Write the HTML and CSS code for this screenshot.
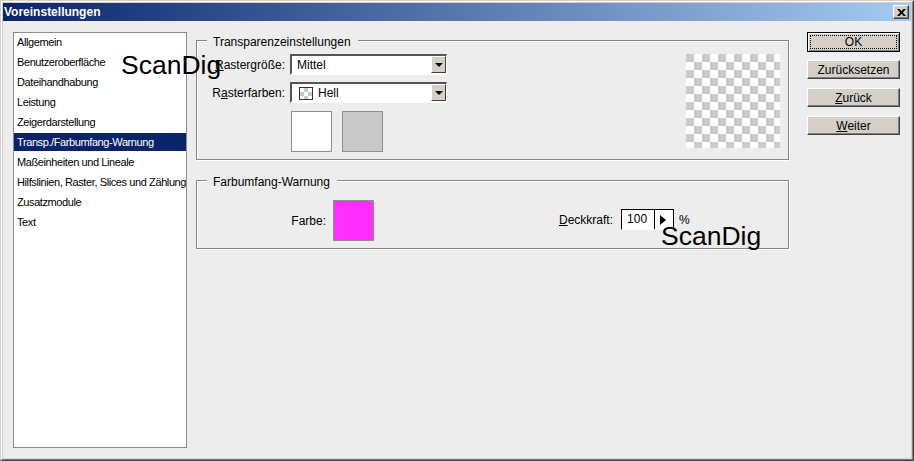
FILE: index.html
```html
<!DOCTYPE html>
<html lang="de">

<head>
  <meta charset="utf-8" />
  <title>Voreinstellungen</title>
  <link rel="stylesheet" href="styles.css">
</head>

<body>
  <div class="window">
    <div class="frame">
      <div class="titlebar">
        <span class="title">Voreinstellungen</span>
        <button class="close" aria-label="Schließen">
          <svg width="9" height="7" viewBox="0 0 9 7"><path d="M0 0h2.500l2 2.200 2-2.200H9L5.800 3.500 9 7H6.500l-2-2.200-2 2.200H0l3.200-3.500z" /></svg>
        </button>
      </div>
      <div class="content">
        <ul class="nav">
          <li>Allgemein</li>
          <li>Benutzeroberfläche</li>
          <li>Dateihandhabung</li>
          <li>Leistung</li>
          <li>Zeigerdarstellung</li>
          <li class="active">Transp./Farbumfang-Warnung</li>
          <li>Maßeinheiten und Lineale</li>
          <li>Hilfslinien, Raster, Slices und Zählung</li>
          <li>Zusatzmodule</li>
          <li>Text</li>
        </ul>

        <div class="panels">
          <fieldset class="group group-transparency">
            <legend>Transparenzeinstellungen</legend>
            <div class="settings">
              <div class="row">
                <label><u>R</u>astergröße:</label>
                <div class="select">
                  <span class="select-value">Mittel</span>
                  <span class="select-arrow"></span>
                </div>
              </div>
              <div class="row">
                <label>R<u>a</u>sterfarben:</label>
                <div class="select">
                  <span class="select-value"><i class="mini-checker"></i>Hell</span>
                  <span class="select-arrow"></span>
                </div>
              </div>
              <div class="swatches">
                <div class="swatch swatch-white"></div>
                <div class="swatch swatch-grey"></div>
              </div>
            </div>
            <div class="checker"></div>
          </fieldset>

          <fieldset class="group group-gamut">
            <legend>Farbumfang-Warnung</legend>
            <div class="gamut-color">
              <label>Farbe:</label>
              <div class="swatch swatch-magenta"></div>
            </div>
            <div class="gamut-opacity">
              <label><u>D</u>eckkraft:</label>
              <div class="spin">
                <span class="spin-value">100</span>
                <span class="spin-arrow"></span>
              </div>
              <span class="unit">%</span>
            </div>
          </fieldset>
        </div>

        <div class="actions">
          <button class="btn btn-default"><span>OK</span></button>
          <button class="btn">Zurücksetzen</button>
          <button class="btn"><u>Z</u>urück</button>
          <button class="btn"><u>W</u>eiter</button>
        </div>
      </div>
    </div>
  </div>

  <div class="mark mark-one">ScanDig</div>
  <div class="mark mark-two">ScanDig</div>
</body>

</html>
```

FILE: styles.css
```css
* {
  box-sizing: border-box;
}

html,
body {
  width: 914px;
  height: 461px;
  margin: 0;
  padding: 0;
  overflow: hidden;
}

body {
  position: relative;
  font-family: "Liberation Sans", Arial, sans-serif;
  font-size: 11px;
  color: #000;
  background: #ededed;
}

.window {
  width: 914px;
  height: 461px;
  border: 1px solid #404040;
  border-top-color: #d4d0c8;
  border-left-color: #d4d0c8;
}

.frame {
  display: flex;
  flex-direction: column;
  height: 100%;
  padding: 1px;
  background: #d4d0c8;
  border: 1px solid #808080;
  border-top-color: #fff;
  border-left-color: #fff;
}

.titlebar {
  display: flex;
  align-items: center;
  justify-content: space-between;
  flex: none;
  height: 18px;
  padding: 0 2px 0 1px;
  background: linear-gradient(to right, #0a246a, #a6caf0);
}

.title {
  font-size: 12px;
  font-weight: bold;
  color: #fff;
}

.close {
  display: flex;
  align-items: center;
  justify-content: center;
  width: 16px;
  height: 14px;
  padding: 0;
  background: #d4d0c8;
  border: 1px solid #404040;
  border-top-color: #fff;
  border-left-color: #fff;
  box-shadow: inset -1px -1px 0 #808080;
}

.content {
  display: flex;
  flex: 1;
  padding: 11px 11px 10px 10px;
  background: #ededed;
}

/* left list */
.nav {
  flex: none;
  width: 174px;
  height: 416px;
  margin: 0;
  padding: 0;
  list-style: none;
  letter-spacing: -0.400px;
  background: #fff;
  border: 1px solid #8e8e8e;
}

.nav li {
  height: 20px;
  padding-left: 3px;
  line-height: 18px;
  white-space: nowrap;
}

.nav li.active {
  color: #fff;
  background: #0a246a;
  height: 18px;
  margin-bottom: 2px;
}

/* groups */
.panels {
  flex: none;
  width: 593px;
  margin-left: 9px;
}

.group {
  display: flex;
  width: 593px;
  margin: 0;
  padding: 0;
  border: 1px solid #858585;
  box-shadow: 1px 1px 0 #fff, inset 1px 1px 0 #fff;
}

.group legend {
  margin-left: 10px;
  padding: 4px 7px 0 6px;
  font-size: 12px;
  line-height: 14px;
  background: #ededed;
}

.group-transparency {
  height: 129px;
  margin-top: -1px;
  padding-top: 5px;
  padding-right: 8px;
  justify-content: space-between;
}

.group-gamut {
  height: 78px;
  margin-top: 11px;
  padding-top: 11px;
}

.settings {
  display: flex;
  flex-direction: column;
  width: 250px;
}

.row {
  display: flex;
  align-items: center;
  justify-content: flex-end;
  gap: 5px;
  margin-bottom: 7px;
}

.row label,
.gamut-color label,
.gamut-opacity label {
  padding-top: 1px;
  font-size: 12px;
  white-space: nowrap;
}

.select {
  display: flex;
  justify-content: space-between;
  width: 157px;
  height: 21px;
  background: #fff;
  border: 2px solid #555;
  border-right: 1px solid #fff;
  border-bottom-color: #fff;
}

.select-value {
  display: flex;
  align-items: center;
  gap: 5px;
  padding: 1px 0 0 5px;
  font-size: 12px;
}

.select-arrow {
  position: relative;
  width: 15px;
  height: 17px;
  background: #d4d0c8;
  border: 1px solid #404040;
  border-top-color: #fff;
  border-left-color: #fff;
}

.select-arrow::after {
  content: "";
  position: absolute;
  left: 3px;
  top: 6px;
  border: 4px solid transparent;
  border-top: 4px solid #000;
  border-bottom: 0;
}

.mini-checker {
  display: block;
  width: 14px;
  height: 13px;
  margin-left: 2px;
  border: 1px solid #333;
  background: repeating-conic-gradient(#c8c8c8 0 25%, #fff 0 50%) 0 0 / 8px 8px;
}

.swatches {
  display: flex;
  gap: 10px;
  margin-top: 1px;
  padding-left: 94px;
}

.swatch {
  flex: none;
  width: 41px;
  height: 41px;
  border: 1px solid #8e8e8e;
}

.swatch-white {
  background: #fff;
}

.swatch-grey {
  background: #c9c9c9;
}

.swatch-magenta {
  background: #ff2fff;
}

.checker {
  flex: none;
  width: 94px;
  height: 94px;
  background: repeating-conic-gradient(#fff 0 25%, #cbcbcb 0 50%) 0 0 / 16px 16px;
}

.gamut-color {
  display: flex;
  align-items: center;
  align-self: flex-start;
  justify-content: flex-end;
  gap: 7px;
  width: 177px;
}

.gamut-opacity {
  display: flex;
  align-items: center;
  align-self: flex-start;
  height: 41px;
  margin-top: -1px;
  margin-left: 185px;
  gap: 8px;
}

.spin {
  display: flex;
  width: 53px;
  height: 21px;
  margin-right: -3px;
  background: #fff;
  border: 1px solid #000;
  border-bottom-color: #fff;
}

.spin-value {
  width: 33px;
  padding-left: 5px;
  font-size: 12px;
  line-height: 19px;
  border-right: 1px solid #000;
}

.spin-arrow {
  position: relative;
  flex: 1;
  background: #fff;
}

.spin-arrow::after {
  content: "";
  position: absolute;
  left: 5px;
  top: 5px;
  border: 5px solid transparent;
  border-left: 6px solid #000;
  border-right: 0;
}

.unit {
  font-size: 12px;
}

/* buttons on the right */
.actions {
  display: flex;
  flex-direction: column;
  gap: 9px;
  flex: none;
  width: 93px;
  margin-left: 18px;
}

.btn {
  width: 93px;
  height: 19px;
  padding: 2px 0 0;
  font-family: inherit;
  font-size: 12px;
  line-height: 15px;
  color: #000;
  background: #d4d0c8;
  border: 1px solid #404040;
  border-top-color: #fff;
  border-left-color: #fff;
  box-shadow: inset -1px -1px 0 #808080;
}

.btn-default {
  height: 20px;
  margin-bottom: -1px;
  padding: 2px;
  border: 1px solid #000;
  box-shadow: inset 1px 1px 0 #fff, inset -1px -1px 0 #808080;
}

.btn-default span {
  display: block;
  height: 14px;
  line-height: 12px;
  border: 1px dotted #000;
}

/* watermarks over the dialog */
.mark {
  position: absolute;
  font-size: 26.500px;
  line-height: 30px;
  color: #000;
  white-space: nowrap;
}

.mark-one {
  left: 121px;
  top: 50px;
}

.mark-two {
  left: 661px;
  top: 221px;
}
```
